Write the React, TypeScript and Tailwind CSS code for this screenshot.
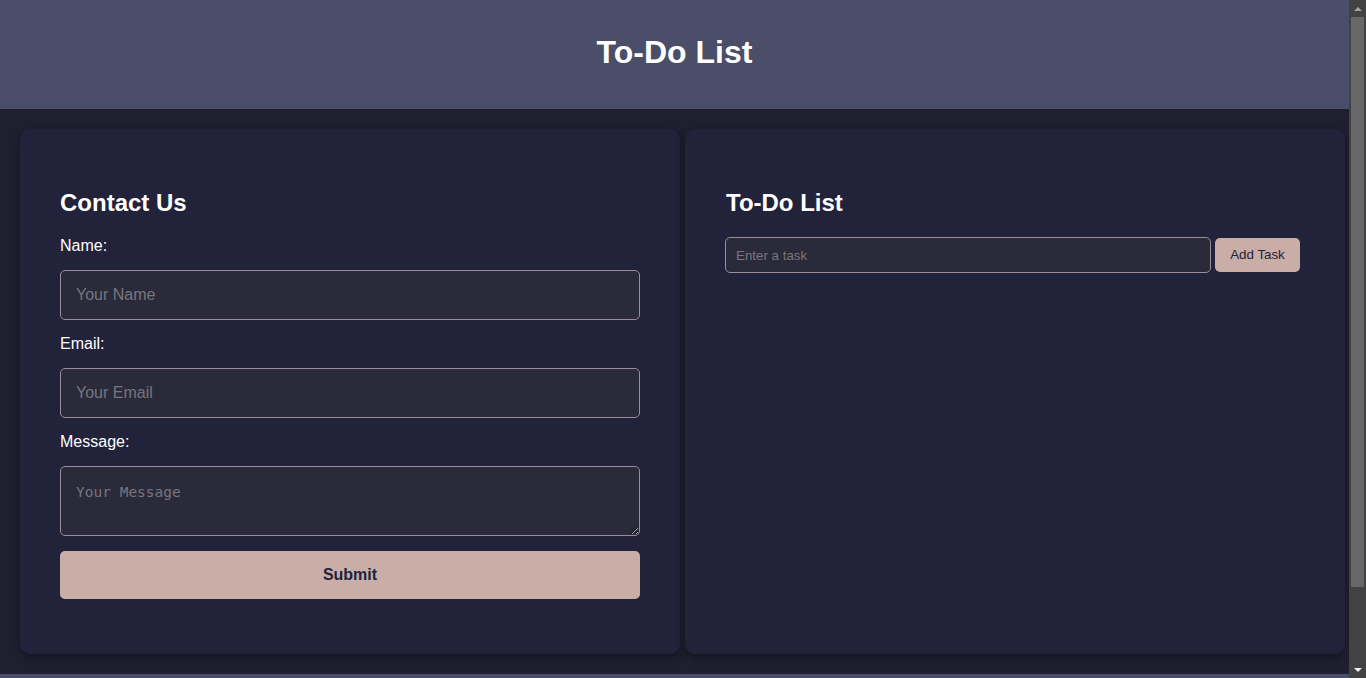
function FakeScrollbar() {
  return (
    <div className="fixed top-0 right-0 h-screen w-[17px] bg-[#424242] flex flex-col items-center">
      <div className="h-[17px] flex items-center justify-center">
        <div className="w-0 h-0 border-l-[4px] border-r-[4px] border-b-[4px] border-l-transparent border-r-transparent border-b-[#a3a3a3]" />
      </div>
      <div className="w-[13px] h-[570px] bg-[#686868]" />
      <div className="flex-1" />
      <div className="h-[17px] flex items-center justify-center">
        <div className="w-0 h-0 border-l-[4px] border-r-[4px] border-t-[4px] border-l-transparent border-r-transparent border-t-[#f0f0f0]" />
      </div>
    </div>
  );
}

const inputCls =
  "block w-full h-[50px] px-[15px] bg-[#2b2a3a] border border-[#9a8c98] rounded-[5px] text-[16px] text-white placeholder:text-[#77757f] outline-none";

export default function App() {
  return (
    <div className="min-h-screen bg-[#201f30] text-white font-['Liberation_Sans',Arial,sans-serif]">
      <div className="w-[1349px]">
        <header className="h-[109px] bg-[#4a4e69] flex items-center justify-center">
          <h1 className="text-[32px] font-bold leading-[37px] mt-[-4px]">To-Do List</h1>
        </header>

        <main className="flex gap-[5px] py-[20px] pl-[20px]">
          <section className="w-[660px] h-[525px] bg-[#22223b] rounded-[10px] shadow-[0_4px_10px_rgba(0,0,0,0.35)] px-[40px] pt-[40px]">
            <h2 className="text-[24px] font-bold leading-[28px] mt-[20px] mb-[20px]">Contact Us</h2>
            <form onSubmit={(e) => e.preventDefault()}>
              <label className="block text-[16px] leading-[18px]">Name:</label>
              <input type="text" placeholder="Your Name" className={`${inputCls} mt-[15px] mb-[15px]`} />
              <label className="block text-[16px] leading-[18px]">Email:</label>
              <input type="email" placeholder="Your Email" className={`${inputCls} mt-[15px] mb-[15px]`} />
              <label className="block text-[16px] leading-[18px]">Message:</label>
              <textarea
                placeholder="Your Message"
                className="block w-full h-[70px] mt-[15px] px-[15px] pt-[17px] pb-[10px] bg-[#2b2a3a] border border-[#9a8c98] rounded-[5px] text-[14.5px] leading-[17px] font-['DejaVu_Sans_Mono',monospace] text-white placeholder:text-[#77757f] outline-none"
              />
              <button
                type="submit"
                className="block w-full h-[48px] mt-[15px] bg-[#c9ada7] text-[#22223b] font-bold text-[16px] rounded-[5px]"
              >
                Submit
              </button>
            </form>
          </section>

          <section className="w-[660px] h-[525px] bg-[#22223b] rounded-[10px] shadow-[0_4px_10px_rgba(0,0,0,0.35)] pl-[40px] pr-[45px] pt-[40px]">
            <h2 className="text-[24px] font-bold leading-[28px] mt-[20px] mb-[20px] ml-[1px]">To-Do List</h2>
            <div className="flex items-center gap-[4px]">
              <input
                type="text"
                placeholder="Enter a task"
                className="w-[486px] h-[36px] px-[10px] bg-[#2b2a3a] border border-[#9a8c98] rounded-[5px] text-[13.33px] text-white placeholder:text-[#77757f] outline-none"
              />
              <button className="w-[85px] h-[34px] bg-[#c9ada7] text-[#22223b] text-[13.33px] rounded-[5px]">
                Add Task
              </button>
            </div>
          </section>
        </main>

        <footer className="h-[92px] bg-[#4a4e69]" />
      </div>
      <FakeScrollbar />
    </div>
  );
}
